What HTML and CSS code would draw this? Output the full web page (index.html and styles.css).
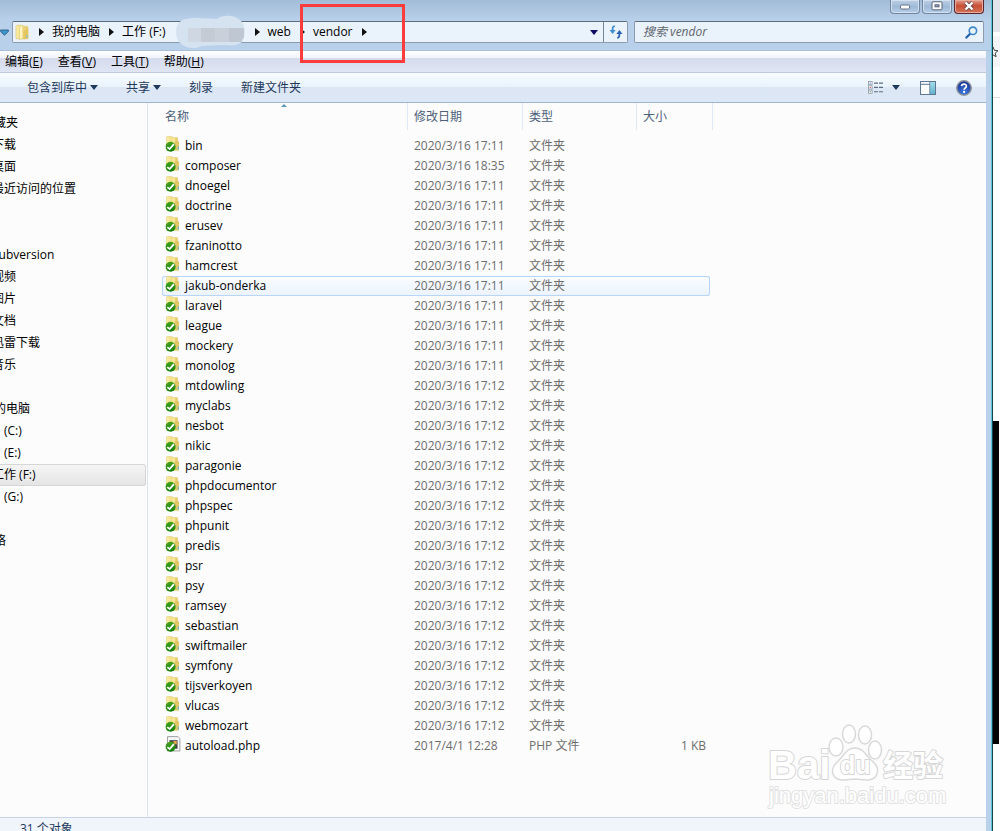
FILE: index.html
```html
<!DOCTYPE html>
<html lang="zh-CN">
<head>
<meta charset="utf-8">
<title>vendor</title>
<link rel="stylesheet" href="styles.css">
</head>
<body>
<svg class="defs" aria-hidden="true">
  <defs>
    <linearGradient id="gold" x1="0" x2="1" y1="0" y2="0"><stop offset="0" stop-color="#fbf0a8"/><stop offset="1" stop-color="#e8ca66"/></linearGradient>
    <linearGradient id="leaf" x1="0" x2="0" y1="0" y2="1"><stop offset="0" stop-color="#47a61e"/><stop offset="1" stop-color="#0f7a08"/></linearGradient>
    <linearGradient id="glass" x1="0" x2="0" y1="0" y2="1"><stop offset="0" stop-color="#a5dcec"/><stop offset="1" stop-color="#62b2cf"/></linearGradient>
    <radialGradient id="orb" cx=".5" cy=".8" r=".8"><stop offset="0" stop-color="#3f7ce0"/><stop offset="1" stop-color="#142c8e"/></radialGradient>
    <symbol id="tick" viewBox="0 0 16 16">
      <circle cx="5.6" cy="10.8" r="5" fill="url(#leaf)"/>
      <path d="M2.3 11.1l2.3 2 4.3-5" fill="none" stroke="#fff" stroke-width="1.8"/>
    </symbol>
    <symbol id="folder" viewBox="0 0 16 16">
      <path d="M1.5 1Q1.5.5 2.3.5H7l1 1h4.6v12.7H1.5z" fill="url(#gold)" stroke="#e3cf82" stroke-width=".6"/>
      <path d="M7 2.6l3-1v12.2H7z" fill="#f8e798"/>
      <path d="M9.6 5.8l3-1.2 1.4 1v8.7H9.6z" fill="#e3c665"/>
      <path d="M13.2 10.4v3" stroke="#6fb5cc" stroke-width="1.2"/>
      <use href="#tick"/>
    </symbol>
    <symbol id="phpfile" viewBox="0 0 16 16">
      <path d="M2.5.6H13l1.9 2V15H2.5z" fill="#f6f6f6" stroke="#a0a0a0"/>
      <path d="M4.5 4.2h8v8.5h-8z" fill="#3a3f44"/>
      <path d="M7 9.5l4-4M8.3 5.6h2.8v2.8" fill="none" stroke="#e9a54c" stroke-width="1.3"/>
      <use href="#tick"/>
    </symbol>
  </defs>
</svg>

<div class="desktop">
  <main class="window">
    <header class="titlebar">
      <div class="caption">
        <button class="cap" aria-label="最小化"><svg width="12" height="8" viewBox="0 0 12 8"><rect x="1.5" y="3" width="9" height="4" rx="1" fill="#fff" stroke="#65738a"/></svg></button>
        <button class="cap" aria-label="最大化"><svg width="12" height="10" viewBox="0 0 12 10"><rect x="1" y=".8" width="10" height="8" rx="1" fill="#fff" stroke="#566479"/><rect x="4" y="3.8" width="4" height="2" fill="#94aac6" stroke="#566479"/></svg></button>
        <button class="cap close" aria-label="关闭"><svg width="12" height="10" viewBox="0 0 12 10"><path d="M2.5 1.5l7 7M9.5 1.5l-7 7" stroke="#6b4a4c" stroke-width="4"/><path d="M2.5 1.5l7 7M9.5 1.5l-7 7" stroke="#fff" stroke-width="2.4"/></svg></button>
      </div>
      <div class="location">
        <button class="recent" aria-label="最近的页面"><svg width="9" height="7" viewBox="0 0 9 7"><path d="M.6 1h7.8v1.5L4.5 6.3.6 2.5z" fill="#3d95c9" stroke="#1f557f" stroke-width=".8"/></svg></button>
        <div class="address">
          <nav class="crumbs">
            <svg class="pack" width="15" height="17" viewBox="0 0 15 17"><path d="M1 2.2l1-1h4l1 1.2h5l1 .8v11.5H1z" fill="url(#gold)" stroke="#dfc673" stroke-width=".7"/><path d="M4.6 3.2L7.8 1v13.6l-3.2 1.2z" fill="#fff6c4" stroke="#ddc05c" stroke-width=".5"/><path d="M8.5 6.6l3.6-1.9 1 1.2v8.6l-4.6 1z" fill="#e4c663"/><path d="M11.8 11v3" stroke="#7dbdd0"/></svg>
            <i class="next"></i><a href="#">我的电脑</a>
            <i class="next"></i><a href="#">工作 (F:)</a>
            <svg class="blob" width="71" height="34" viewBox="0 0 71 34"><path d="M1 17C1 6 8 3 20 3L42 4C48-1 60 0 65 5 70 9 71 19 68 25 65 31 57 31 47 30L27 31C17 36 1 32 1 17Z" fill="#d5e2f0"/><path d="M13 13h13v14H13z" fill="#cfd8e2"/><path d="M26 13h14v14H26z" fill="#c4cbd5"/><path d="M40 13h14v14H40z" fill="#c9d0da"/><path d="M54 13h15v9l-3 5H54z" fill="#bfc7d2"/></svg>
            <i class="next"></i><a href="#">web</a>
            <i class="next"></i><a href="#">vendor</a>
            <i class="next"></i>
          </nav>
          <button class="drop" aria-label="以前的位置"><i class="down navy"></i></button>
          <button class="refresh" aria-label="刷新"><svg width="14" height="14" viewBox="0 0 14 14"><path d="M5.8 1.2C3.5 1.2 3.6 3 3.6 6" fill="none" stroke="#3d8fd0" stroke-width="1.8"/><path d="M.5 5h6.2L3.6 9z" fill="#3d8fd0"/><path d="M8.2 12.8c2.3 0 2.2-1.8 2.2-4.8" fill="none" stroke="#2b62b4" stroke-width="1.8"/><path d="M7.3 9h6.2l-3.1-4z" fill="#2b62b4"/></svg></button>
        </div>
        <div class="search">
          <input type="text" placeholder="搜索 vendor" aria-label="搜索 vendor">
          <svg width="13" height="13" viewBox="0 0 13 13"><path d="M5.4 7.4L1.4 11.6" stroke="#2460ad" stroke-width="2.2" stroke-linecap="round"/><circle cx="7.9" cy="4.8" r="3.7" fill="#e7f4fc" stroke="#3c87c8" stroke-width="1.6"/></svg>
        </div>
      </div>
    </header>

    <div class="client">
      <nav class="menubar">
        <button>编辑(<u>E</u>)</button><button>查看(<u>V</u>)</button><button>工具(<u>T</u>)</button><button>帮助(<u>H</u>)</button>
      </nav>
      <div class="toolbar">
        <button>包含到库中<i class="down"></i></button>
        <button>共享<i class="down"></i></button>
        <button>刻录</button>
        <button>新建文件夹</button>
        <div class="tools">
          <button class="views" aria-label="更改视图"><svg width="16" height="13" viewBox="0 0 16 13"><g fill="#fff" stroke="#8a97a8" stroke-width=".8"><rect x=".5" y=".5" width="3.6" height="3.2"/><rect x=".5" y="4.8" width="3.6" height="3.2"/><rect x=".5" y="9.1" width="3.6" height="3.2"/></g><path d="M1.7 2.1h1.2" stroke="#4e7dbb"/><path d="M1.7 6.4h1.2" stroke="#d43a2f"/><path d="M1.7 10.7h1.2" stroke="#5f8f5c"/><path d="M6 2.1h4M11 2.1h4M6 6.4h4M11 6.4h4M6 10.7h4M11 10.7h4" stroke="#5b6b80" stroke-width="1.1"/></svg><i class="down"></i></button>
          <button aria-label="显示预览窗格"><svg width="16" height="14" viewBox="0 0 16 14"><rect x=".5" y=".5" width="15" height="13" fill="#fdfdfd" stroke="#5d7791"/><path d="M1 3.3h9" stroke="#5d7791"/><rect x="10" y="1" width="5" height="12" fill="url(#glass)"/><path d="M9.7 1v12" stroke="#5d7791" stroke-width=".8"/></svg></button>
          <button aria-label="获取帮助"><svg width="16" height="16" viewBox="0 0 16 16"><circle cx="8" cy="8" r="7.2" fill="url(#orb)" stroke="#8d929b" stroke-width="1.5"/><path d="M5.6 6.1C5.7 3.5 10.5 3.4 10.4 6.2 10.3 7.8 8.1 7.9 8.1 9.7" fill="none" stroke="#fff" stroke-width="1.7"/><circle cx="8.1" cy="11.9" r="1.1" fill="#fff"/></svg></button>
        </div>
      </div>

      <div class="panes">
        <nav class="tree">
          <ul>
            <li class="root">收藏夹</li>
            <li>下载</li><li>桌面</li><li>最近访问的位置</li>
          </ul>
          <ul class="libraries">
            <li>Subversion</li><li>视频</li><li>图片</li><li>文档</li><li>迅雷下载</li><li>音乐</li>
          </ul>
          <ul>
            <li class="root">我的电脑</li>
            <li class="drive">(C:)</li><li class="drive">(E:)</li><li class="current">工作 (F:)</li><li class="drive">(G:)</li>
          </ul>
          <ul>
            <li class="root">网络</li>
          </ul>
        </nav>

        <section class="files">
          <table>
            <colgroup><col class="c-name"><col class="c-date"><col class="c-type"><col class="c-size"><col class="c-end"></colgroup>
            <thead><tr><th class="sorted">名称</th><th>修改日期</th><th>类型</th><th>大小</th><th></th></tr></thead>
            <tbody>
              <tr><td><svg><use href="#folder"/></svg>bin</td><td>2020/3/16 17:11</td><td>文件夹</td><td></td></tr>
              <tr><td><svg><use href="#folder"/></svg>composer</td><td>2020/3/16 18:35</td><td>文件夹</td><td></td></tr>
              <tr><td><svg><use href="#folder"/></svg>dnoegel</td><td>2020/3/16 17:11</td><td>文件夹</td><td></td></tr>
              <tr><td><svg><use href="#folder"/></svg>doctrine</td><td>2020/3/16 17:11</td><td>文件夹</td><td></td></tr>
              <tr><td><svg><use href="#folder"/></svg>erusev</td><td>2020/3/16 17:11</td><td>文件夹</td><td></td></tr>
              <tr><td><svg><use href="#folder"/></svg>fzaninotto</td><td>2020/3/16 17:11</td><td>文件夹</td><td></td></tr>
              <tr><td><svg><use href="#folder"/></svg>hamcrest</td><td>2020/3/16 17:11</td><td>文件夹</td><td></td></tr>
              <tr class="hover"><td><svg><use href="#folder"/></svg>jakub-onderka</td><td>2020/3/16 17:11</td><td>文件夹</td><td></td></tr>
              <tr><td><svg><use href="#folder"/></svg>laravel</td><td>2020/3/16 17:11</td><td>文件夹</td><td></td></tr>
              <tr><td><svg><use href="#folder"/></svg>league</td><td>2020/3/16 17:11</td><td>文件夹</td><td></td></tr>
              <tr><td><svg><use href="#folder"/></svg>mockery</td><td>2020/3/16 17:11</td><td>文件夹</td><td></td></tr>
              <tr><td><svg><use href="#folder"/></svg>monolog</td><td>2020/3/16 17:11</td><td>文件夹</td><td></td></tr>
              <tr><td><svg><use href="#folder"/></svg>mtdowling</td><td>2020/3/16 17:12</td><td>文件夹</td><td></td></tr>
              <tr><td><svg><use href="#folder"/></svg>myclabs</td><td>2020/3/16 17:12</td><td>文件夹</td><td></td></tr>
              <tr><td><svg><use href="#folder"/></svg>nesbot</td><td>2020/3/16 17:12</td><td>文件夹</td><td></td></tr>
              <tr><td><svg><use href="#folder"/></svg>nikic</td><td>2020/3/16 17:12</td><td>文件夹</td><td></td></tr>
              <tr><td><svg><use href="#folder"/></svg>paragonie</td><td>2020/3/16 17:12</td><td>文件夹</td><td></td></tr>
              <tr><td><svg><use href="#folder"/></svg>phpdocumentor</td><td>2020/3/16 17:12</td><td>文件夹</td><td></td></tr>
              <tr><td><svg><use href="#folder"/></svg>phpspec</td><td>2020/3/16 17:12</td><td>文件夹</td><td></td></tr>
              <tr><td><svg><use href="#folder"/></svg>phpunit</td><td>2020/3/16 17:12</td><td>文件夹</td><td></td></tr>
              <tr><td><svg><use href="#folder"/></svg>predis</td><td>2020/3/16 17:12</td><td>文件夹</td><td></td></tr>
              <tr><td><svg><use href="#folder"/></svg>psr</td><td>2020/3/16 17:12</td><td>文件夹</td><td></td></tr>
              <tr><td><svg><use href="#folder"/></svg>psy</td><td>2020/3/16 17:12</td><td>文件夹</td><td></td></tr>
              <tr><td><svg><use href="#folder"/></svg>ramsey</td><td>2020/3/16 17:12</td><td>文件夹</td><td></td></tr>
              <tr><td><svg><use href="#folder"/></svg>sebastian</td><td>2020/3/16 17:12</td><td>文件夹</td><td></td></tr>
              <tr><td><svg><use href="#folder"/></svg>swiftmailer</td><td>2020/3/16 17:12</td><td>文件夹</td><td></td></tr>
              <tr><td><svg><use href="#folder"/></svg>symfony</td><td>2020/3/16 17:12</td><td>文件夹</td><td></td></tr>
              <tr><td><svg><use href="#folder"/></svg>tijsverkoyen</td><td>2020/3/16 17:12</td><td>文件夹</td><td></td></tr>
              <tr><td><svg><use href="#folder"/></svg>vlucas</td><td>2020/3/16 17:12</td><td>文件夹</td><td></td></tr>
              <tr><td><svg><use href="#folder"/></svg>webmozart</td><td>2020/3/16 17:12</td><td>文件夹</td><td></td></tr>
              <tr><td><svg><use href="#phpfile"/></svg>autoload.php</td><td>2017/4/1 12:28</td><td>PHP 文件</td><td>1 KB</td></tr>
            </tbody>
          </table>
          <svg class="watermark" width="190" height="94" viewBox="0 0 190 94">
            <g fill="#fff" stroke="#d9d9d9" stroke-width="1.5">
              <ellipse cx="69" cy="30" rx="7" ry="9"/><ellipse cx="82" cy="17" rx="6.5" ry="9"/><ellipse cx="98" cy="18" rx="6.5" ry="9"/><ellipse cx="108" cy="33" rx="6.5" ry="9"/>
              <path d="M88 31C96 31 98 37 103 42 109 47 112 51 110 57 107 65 98 63 88 62 78 63 69 65 66 57 64 51 68 47 73 42 78 37 80 31 88 31Z"/>
            </g>
            <g class="wm-fill"><text class="wm-brand" x="1" y="62">Bai</text><text class="wm-du" x="73" y="57">du</text><text class="wm-cjk" x="116" y="59">经验</text><text class="wm-url" x="2" y="86">jingyan.baidu.com</text></g>
          </svg>
        </section>
      </div>
      <footer class="status">31 个对象</footer>
    </div>
    <div class="marker"></div>
  </main>

  <aside class="behind">
    <div class="tab"></div>
    <div class="star"><svg width="12" height="12" viewBox="0 0 12 12"><path d="M6 1l1.4 3.4 3.6.3-2.8 2.4.9 3.6L6 8.8l-3.1 1.9.9-3.6L1 4.7l3.6-.3z" fill="#fff" stroke="#444"/></svg></div>
    <div class="page"></div>
    <div class="dark"></div>
  </aside>
</div>
</body>
</html>
```

FILE: styles.css
```css
* { box-sizing: border-box; }

body {
  margin: 0;
  font: 12px/20px "Open Sans", "Noto Sans CJK SC", sans-serif;
  color: #000;
  background: #fff;
}

button {
  padding: 0;
  border: 0;
  background: none;
  font: inherit;
  color: inherit;
}

a { color: inherit; text-decoration: none; }
svg { display: block; flex: none; }
.defs { position: absolute; width: 0; height: 0; }

.desktop { display: flex; height: 100vh; overflow: hidden; }

.window {
  position: relative;
  flex: 1;
  min-width: 0;
  display: flex;
  flex-direction: column;
  background: #bad1eb;
  border-right: 1px solid #17434f;
  box-shadow: inset -1px 0 #58c6d8;
}

/* title bar */
.titlebar {
  padding: 0 7px 7px 0;
  background: linear-gradient(#a2bcd7, #b9d0ea 20px, #b9d0ea);
  border-bottom: 1px solid #a9c0da;
  margin-right: 1px;
}

.caption { display: flex; justify-content: flex-end; gap: 2px; height: 21px; }

.cap {
  display: flex;
  justify-content: center;
  align-items: center;
  width: 30px;
  height: 14px;
  padding-bottom: 2px;
  border: 1px solid #71859f;
  border-top: 0;
  border-radius: 0 0 4px 4px;
  background: linear-gradient(#bdd0e6, #9fb9d6 50%, #b5cde8);
  box-shadow: inset 0 0 0 1px #d3e1f1;
}

.close {
  background: linear-gradient(#e0a090, #c84e34 45%, #d4765a);
  border-color: #5a2632;
  box-shadow: inset 0 0 0 1px #e7aa9b;
}

.location { display: flex; height: 22px; }
.recent { display: flex; align-items: center; width: 12px; }

.address, .search {
  display: flex;
  align-items: center;
  background: #eaf2fb;
  border: 1px solid #8c9cae;
  border-top-color: #5f6d7c;
  border-radius: 2px;
}

.address { flex: 1; min-width: 0; }
.search { width: 350px; margin-left: 6px; padding: 0 5px 0 8px; }

.crumbs { display: flex; flex: 1; align-items: center; gap: 9px; height: 20px; padding-left: 2px; white-space: nowrap; }
.crumbs a { margin-left: -1px; }

.next {
  border: 4px solid transparent;
  border-left: 5px solid #111;
  border-right: 0;
}

.down {
  border: 4px solid transparent;
  border-top: 5px solid #1e395b;
  border-bottom: 0;
}
.down.navy { border-top-color: #0c0c60; }

.drop { display: flex; align-items: center; height: 20px; padding: 0 5px; }
.refresh { display: grid; place-items: center; width: 24px; height: 20px; border-left: 1px solid #77869a; }

.search input {
  flex: 1;
  min-width: 0;
  padding: 0;
  border: 0;
  outline: 0;
  background: none;
  font: inherit;
  font-style: italic;
}
.search input::placeholder { color: #5f666e; opacity: 1; }

/* client area */
.client { flex: 1; min-height: 0; display: flex; flex-direction: column; margin-right: 6px; background: #fcfcfc; }

.menubar {
  display: flex;
  gap: 15px;
  height: 22px;
  padding-left: 5px;
  background: linear-gradient(#fff, #f0f3fa 7px, #d5daed 7px, #e0e5f4);
  border-bottom: 1px solid #c0c9dc;
}

.toolbar {
  display: flex;
  align-items: center;
  gap: 28px;
  height: 30px;
  padding: 0 14px 0 27px;
  background: linear-gradient(#f7fcff, #e9f3fc 14px, #dce6f4 14px, #dde8f6);
  border-bottom: 1px solid #a0b4cd;
  color: #1e395b;
}
.toolbar button { display: flex; align-items: center; gap: 3px; }
.tools { display: flex; align-items: center; gap: 20px; margin-left: auto; }
.tools .views { gap: 8px; }

.panes { flex: 1; min-height: 0; display: flex; }

.tree { width: 148px; padding-top: 9px; overflow: hidden; border-right: 1px solid #dbe4f3; line-height: 22px; white-space: nowrap; }
.tree ul { margin: 0 1px 22px -18px; padding: 0; list-style: none; }
.tree li { height: 22px; padding-left: 10px; }
.tree .root { padding-left: 0; }
.tree .libraries { padding-top: 22px; }
.tree .drive { padding-left: 22px; }
.tree .current {
  background: linear-gradient(#f6f6f6, #e4e4e4);
  border-radius: 3px;
  box-shadow: inset 0 0 0 1px #d6d6d6;
}

.files { position: relative; flex: 1; padding-left: 14px; }
.files table { width: 551px; table-layout: fixed; border-collapse: separate; border-spacing: 0; }
.c-name { width: 246px; }
.c-date { width: 115px; }
.c-type { width: 114px; }
.c-size { width: 73px; }
.c-end { width: 3px; }

.files th {
  position: relative;
  height: 27px;
  padding: 0 0 0 6px;
  border-right: 1px solid #e0e9f5;
  text-align: left;
  font-weight: normal;
  color: #4c607a;
}
.files th:first-child { padding-left: 3px; }
.files th:nth-child(4) { border-right: 0; }
.files th:last-child { padding: 0; }
.files thead::after { content: ""; display: block; height: 6px; }

.sorted::after {
  content: "";
  position: absolute;
  top: 1px;
  left: 50%;
  margin-left: -4px;
  border: 3px solid transparent;
  border-bottom-color: #5b98b8;
  border-top: 0;
}

.files td { height: 20px; padding: 0 0 0 6px; white-space: nowrap; color: #6d6d6d; }
.files td:first-child { display: flex; align-items: flex-start; gap: 4px; padding-left: 3px; color: #000; }
.files td:last-child { padding: 0 4px 0 0; text-align: right; }
.files td svg { width: 16px; height: 16px; }

.hover td { background: linear-gradient(#fafcff, #ebf3fd); box-shadow: inset 0 1px #b8d6fb, inset 0 -1px #b8d6fb; }
.hover td:first-child { border-radius: 3px 0 0 3px; box-shadow: inset 0 1px #b8d6fb, inset 0 -1px #b8d6fb, inset 1px 0 #b8d6fb; }
.hover td:last-child { border-radius: 0 3px 3px 0; box-shadow: inset 0 1px #b8d6fb, inset 0 -1px #b8d6fb, inset -1px 0 #b8d6fb; }

.watermark { position: absolute; right: 29px; bottom: 6px; }
.wm-fill { fill: #fff; stroke: #d6d6d6; stroke-width: 2px; paint-order: stroke; stroke-linejoin: round; }
.wm-brand { font: bold 40px "Liberation Sans", sans-serif; }
.wm-du { font: bold 25px "Liberation Sans", sans-serif; }
.wm-cjk { font: bold 30px "Noto Sans CJK SC", sans-serif; }
.wm-url { font: 22px "Liberation Sans", sans-serif; stroke: #e2e2e2; }

.status {
  height: 14px;
  padding: 1px 0 0 20px;
  overflow: hidden;
  background: #f0f4fb;
  border-top: 1px solid #c6d3e9;
  color: #1e395b;
}

/* annotation drawn over the address bar */
.marker { position: absolute; left: 300px; top: 4px; width: 105px; height: 59px; border: 3px solid #fa3c3c; }

/* window behind */
.behind { display: flex; flex-direction: column; width: 7px; overflow: hidden; background: #fff; }
.tab { height: 32px; background: #e1e4e9; }
.star { display: flex; align-items: center; justify-content: flex-end; height: 31px; margin-top: 4px; background: #f3f4f5; }
.star svg { margin-right: 1px; }
.page { height: 31px; border-bottom: 1px solid #ddd; }
.dark { width: 6px; height: 323px; margin-top: 323px; background: #000; }
```
